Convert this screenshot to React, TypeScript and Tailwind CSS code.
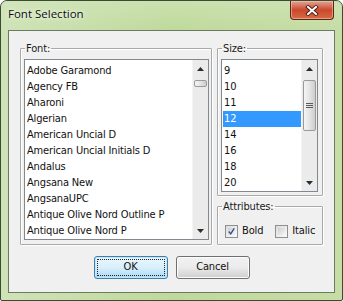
const fonts = [
  'Adobe Garamond',
  'Agency FB',
  'Aharoni',
  'Algerian',
  'American Uncial D',
  'American Uncial Initials D',
  'Andalus',
  'Angsana New',
  'AngsanaUPC',
  'Antique Olive Nord Outline P',
  'Antique Olive Nord P',
]

const sizes = ['9', '10', '11', '12', '14', '16', '18', '20']

const ui = "font-['DejaVu_Sans_Condensed','DejaVu_Sans',sans-serif] text-[11px] tracking-[-0.15px]"

function Arrow({ up }: { up?: boolean }) {
  return (
    <svg width="7" height="4" viewBox="0 0 7 4">
      <path d={up ? 'M0 4 L3.5 0 L7 4 Z' : 'M0 0 L3.5 4 L7 0 Z'} fill="#2c2c2c" />
    </svg>
  )
}

function ScrollBar({ gap, thumb, grip }: { gap: number; thumb: number; grip?: boolean }) {
  return (
    <div className="w-[16px] flex flex-col bg-[#ebebeb] border-l border-[#f4f4f4]">
      <div className="h-[17px] flex items-center justify-center pt-[1px]">
        <Arrow up />
      </div>
      <div style={{ height: gap }} />
      <div
        style={{ height: thumb }}
        className="mx-[1px] rounded-[2px] border border-[#9a9a9a] bg-gradient-to-r from-[#f4f4f4] via-[#e4e4e4] to-[#cdcdcd] flex flex-col items-center justify-center gap-[1px]"
      >
        {grip && (
          <>
            <div className="w-[7px] h-[1px] bg-[#5c5c5c]" />
            <div className="w-[7px] h-[1px] bg-[#5c5c5c]" />
            <div className="w-[7px] h-[1px] bg-[#5c5c5c]" />
          </>
        )}
      </div>
      <div className="flex-1" />
      <div className="h-[17px] flex items-center justify-center">
        <Arrow />
      </div>
    </div>
  )
}

function Group({ label, className, children }: { label: string; className: string; children: React.ReactNode }) {
  return (
    <fieldset
      className={`border border-[#a9a9a9] shadow-[inset_1px_1px_0_#fff,1px_1px_0_#fff] rounded-[1px] ${className}`}
    >
      <legend className="ml-[4px] px-[1px] leading-[13px] text-[#1a1a1a]">{label}</legend>
      {children}
    </fieldset>
  )
}

function CheckBox({ checked, label }: { checked?: boolean; label: string }) {
  return (
    <div className="flex items-center gap-[4px]">
      <div className="w-[13px] h-[13px] border border-[#8e8f8f] bg-gradient-to-br from-[#dcdcdc] to-[#fbfbfb] p-[2px]">
        <div className="w-full h-full bg-gradient-to-br from-[#cbcfd5] to-[#f6f6f6] flex items-center justify-center">
          {checked && (
            <svg width="9" height="9" viewBox="0 0 9 9">
              <path d="M1 4.5 L3.5 7.5 L8 0.5" stroke="#3c4f8a" strokeWidth="1.8" fill="none" />
            </svg>
          )}
        </div>
      </div>
      <span className="text-[#111]">{label}</span>
    </div>
  )
}

export default function App() {
  return (
    <div className="w-[343px] h-[301px] bg-white">
      <div className="w-[343px] h-[301px] flex flex-col rounded-t-[7px] rounded-b-[2px] border border-[#3b4a33] bg-gradient-to-r from-[#cfe3b8] via-[#bfd99b] to-[#c6dda6] overflow-hidden">
        {/* title bar */}
        <div className="h-[29px] flex items-start justify-between bg-gradient-to-b from-[#d3e6bc]/60 to-transparent">
          <div className="pl-[7px] pt-[6px] font-['Open_Sans','Noto_Sans',sans-serif] text-[11.5px] leading-[14px] text-[#0c0c0c] [text-shadow:0_0_6px_#f2f7ec,0_0_3px_#f2f7ec]">
            Font Selection
          </div>
          <div className="mr-[8px] w-[44px] h-[19px] rounded-b-[4px] border border-t-0 border-[#5a261a] bg-gradient-to-b from-[#e3a294] via-[#c9482b] to-[#d86a45] shadow-[inset_0_0_0_1px_rgba(255,210,190,0.5)] flex items-center justify-center">
            <svg width="14" height="11" viewBox="0 0 14 11">
              <path d="M3 2 L11 9 M11 2 L3 9" stroke="#4a1d14" strokeWidth="3.8" strokeLinecap="square" />
              <path d="M3 2 L11 9 M11 2 L3 9" stroke="#ffffff" strokeWidth="2" strokeLinecap="square" />
            </svg>
          </div>
        </div>

        {/* client */}
        <div className={`mx-[7px] mb-[7px] flex-1 flex flex-col border border-[#6b7a62] bg-[#f0f0f0] ${ui}`}>
          <div className="flex gap-[5px] pt-[11px] pl-[11px]">
            <Group label="Font:" className="w-[192px] h-[203px]">
              <div className="mt-[4px] ml-[3px] mr-[2px] h-[181px] flex border border-[#828790] bg-white">
                <div className="flex-1 pt-[3px] overflow-hidden">
                  {fonts.map((f) => (
                    <div key={f} className="h-[16px] leading-[16px] ml-[1px] pl-[1px] whitespace-nowrap text-[#111]">
                      {f}
                    </div>
                  ))}
                </div>
                <ScrollBar gap={3} thumb={7} />
              </div>
            </Group>

            <div className="w-[106px] flex flex-col gap-[4px]">
              <Group label="Size:" className="h-[154px]">
                <div className="mt-[4px] ml-[3px] mr-[4px] h-[133px] flex border border-[#828790] bg-white">
                  <div className="flex-1 pt-[3px] overflow-hidden">
                    {sizes.map((s) => (
                      <div
                        key={s}
                        className={`h-[16px] leading-[16px] ml-[1px] pl-[1px] ${
                          s === '12' ? 'bg-[#3399ff] text-white' : 'text-[#111]'
                        }`}
                      >
                        {s}
                      </div>
                    ))}
                  </div>
                  <ScrollBar gap={3} thumb={51} grip />
                </div>
              </Group>

              <Group label="Attributes:" className="h-[45px]">
                <div className="mt-[10px] ml-[7px] flex gap-[12px]">
                  <CheckBox checked label="Bold" />
                  <CheckBox label="Italic" />
                </div>
              </Group>
            </div>
          </div>

          <div className="mt-[11px] flex justify-center gap-[8px]">
            <button className="w-[74px] h-[23px] rounded-[3px] border border-[#3c7fb1] bg-gradient-to-b from-[#eaf6fd] via-[#d9f0fc] to-[#a7d9f5] shadow-[inset_0_0_0_1px_#c6e6f8] p-[2px]">
              <div className="w-full h-full border border-dotted border-[#222] flex items-center justify-center text-[#111]">
                OK
              </div>
            </button>
            <button className="w-[74px] h-[23px] rounded-[3px] border border-[#707070] bg-gradient-to-b from-[#f2f2f2] via-[#ebebeb] to-[#cfcfcf] shadow-[inset_0_0_0_1px_#fcfcfc] flex items-center justify-center text-[#111]">
              Cancel
            </button>
          </div>
        </div>
      </div>
    </div>
  )
}
